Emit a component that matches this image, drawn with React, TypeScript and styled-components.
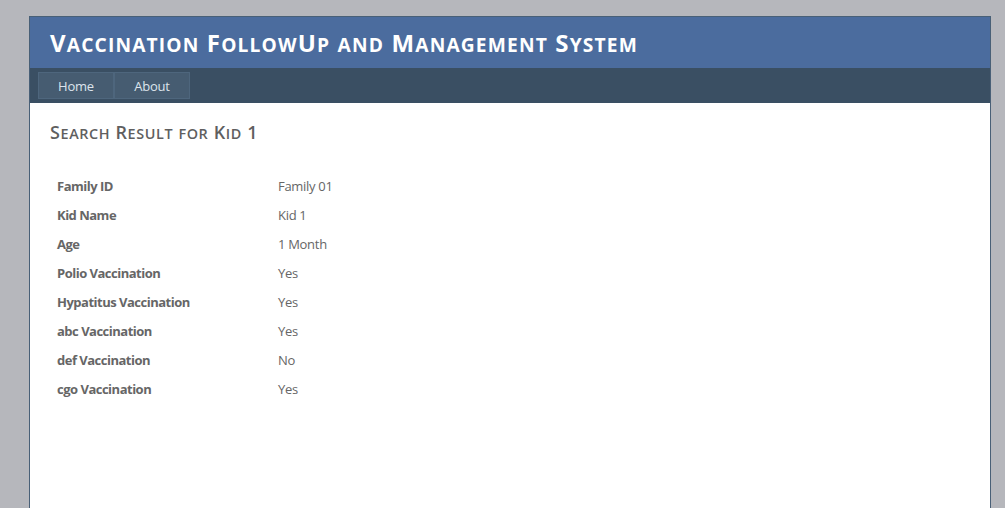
import React from "react";
import styled, { createGlobalStyle } from "styled-components";

const GlobalStyle = createGlobalStyle`
  html, body {
    margin: 0;
    padding: 0;
    overflow: hidden;
  }
  body {
    background: #b6b7bc;
    font-family: "Open Sans", "Noto Sans", Arial, sans-serif;
    font-size: 13px;
    color: #666;
  }
`;

const Page = styled("div")`
  width: 960px;
  min-height: 560px;
  margin: 16px 0 0 29px;
  background: #fff;
  border: 1px solid #496077;
`;

const Header = styled("header")`
  display: flex;
  align-items: center;
  height: 51px;
  padding-left: 20px;
  background: #4b6c9e;
`;

const Title = styled("h1")`
  margin: 0;
  color: #fff;
  font-size: 24px;
  font-weight: 700;
  letter-spacing: 1.15px;
`;

const NavBar = styled("nav")`
  display: flex;
  height: 35px;
  padding: 4px 8px 0;
  box-sizing: border-box;
  background: #3a4f63;
`;

const NavLink = styled("a")`
  display: flex;
  align-items: center;
  justify-content: center;
  width: 76px;
  height: 27px;
  box-sizing: border-box;
  background: #465c71;
  border: 1px solid #4e667d;
  color: #dde4ec;
  font-size: 13px;
  letter-spacing: -0.2px;
  text-decoration: none;
`;

const Main = styled("main")`
  padding: 17px 20px 0;
`;

const Heading = styled("h2")`
  margin: 0 0 27px;
  color: #5f5f5f;
  font-size: 18px;
  font-weight: 600;
  letter-spacing: 0.6px;
`;

// lower-case runs drawn as smaller capitals, like the font's small caps
const Lower = styled("span")`
  font-size: 0.8em;
  text-transform: uppercase;
`;

const SmallCaps: React.FC<{ text: string }> = ({ text }) => (
  <>
    {text.split(/([a-z]+)/).map((part, i) =>
      /^[a-z]+$/.test(part) ? <Lower key={i}>{part}</Lower> : part
    )}
  </>
);

const DetailTable = styled("table")`
  border-collapse: collapse;
  margin-left: 1px;
`;

const Row = styled("tr")`
  height: 29px;
`;

const Label = styled("th")`
  width: 209px;
  padding: 0 6px;
  text-align: left;
  font-weight: 700;
  letter-spacing: -0.5px;
  color: #666;
`;

const Value = styled("td")`
  padding: 0 6px;
  letter-spacing: -0.3px;
  color: #666;
`;

const details: [string, string][] = [
  ["Family ID", "Family 01"],
  ["Kid Name", "Kid 1"],
  ["Age", "1 Month"],
  ["Polio Vaccination", "Yes"],
  ["Hypatitus Vaccination", "Yes"],
  ["abc Vaccination", "Yes"],
  ["def Vaccination", "No"],
  ["cgo Vaccination", "Yes"],
];

export default function App() {
  return (
    <>
      <GlobalStyle />
      <Page>
        <Header>
          <Title>
            <SmallCaps text="Vaccination FollowUp and Management System" />
          </Title>
        </Header>
        <NavBar>
          <NavLink href="#">Home</NavLink>
          <NavLink href="#">About</NavLink>
        </NavBar>
        <Main>
          <Heading>
            <SmallCaps text="Search Result for Kid 1" />
          </Heading>
          <DetailTable>
            <tbody>
              {details.map(([label, value]) => (
                <Row key={label}>
                  <Label>{label}</Label>
                  <Value>{value}</Value>
                </Row>
              ))}
            </tbody>
          </DetailTable>
        </Main>
      </Page>
    </>
  );
}
